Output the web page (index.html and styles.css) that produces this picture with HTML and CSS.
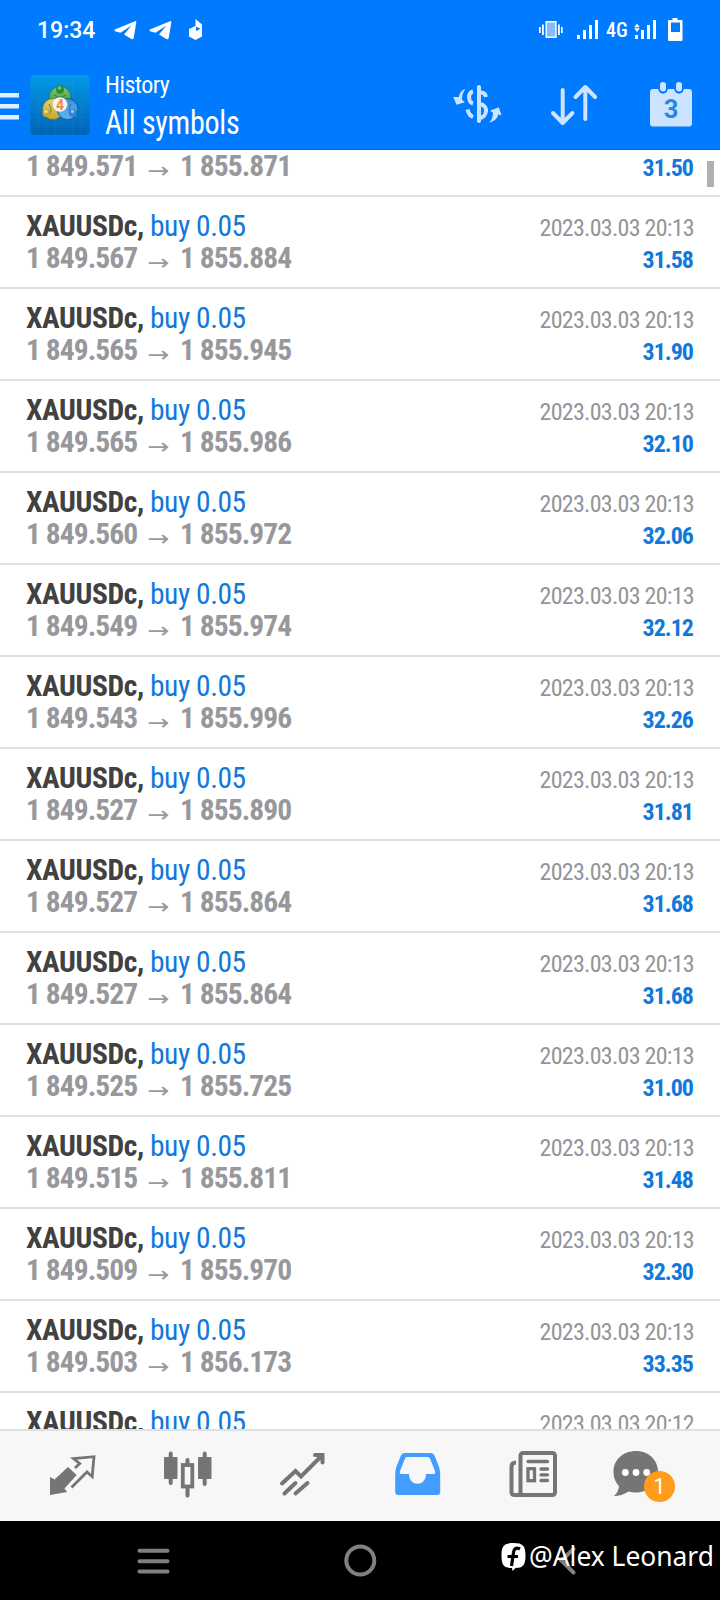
FILE: index.html
```
<!DOCTYPE html>
<html lang="en">
<head>
<meta charset="utf-8">
<title>History</title>
<link rel="stylesheet" href="styles.css">
</head>
<body>
<div class="screen">
  <header class="top">
    <div class="status">
      <span class="clock">19:34</span>
      <svg class="notes" viewBox="110 15 100 30" fill="#fff">
        <path d="M114.800 29.500 L135 21.200 Q136.500 20.800 136.300 22.500 L133.700 38 Q133 40 131 38.700 L124 34.500 L131.500 25.500 L120.500 32.700 L115 31.200 Q114 30.200 114.800 29.500Z"/>
        <path d="M149.800 29.500 L170 21.200 Q171.500 20.800 171.300 22.500 L168.700 38 Q168 40 166 38.700 L159 34.500 L166.500 25.500 L155.500 32.700 L150 31.200 Q149 30.200 149.800 29.500Z"/>
        <path fill-rule="evenodd" d="M195.500 19 L202 24.500 V36.500 L195.500 40 L189 36.500 V29 L195.500 26Z M196 26.500 V31 L200.500 28.700Z"/>
      </svg>
      <svg class="signal" viewBox="535 15 64 30" fill="#fff">
        <path d="M539 27h1.700v6H539zM542 24.500h1.800v10.500H542zM558 24.500h1.800v10.500H558zM561 27h1.700v6H561z"/>
        <rect x="546.200" y="21.800" width="9.700" height="15.400" fill="#80bcff" stroke="#fff" stroke-width="1.500"/>
        <path d="M577 35h3v4h-3zM583 30h3v9h-3zM589 25h3v14h-3zM595 20h3v19h-3z"/>
      </svg>
      <span class="net">4G</span>
      <svg class="battery" viewBox="632 15 54 30" fill="#fff">
        <path d="M637 23.500l2.800 3.700h-5.600zM637 32l-2.800-3.700h5.600zM635 35h3v4h-3zM641 30h3v9h-3zM647 25h3v14h-3zM653 20h3v19h-3z"/>
        <path fill-rule="evenodd" d="M672.500 18h5v2h4q1 0 1 1v19q0 1-1 1h-12.500q-1 0-1-1V21q0-1 1-1h3.500zM671 22.500v9.500h9v-9.500z"/>
      </svg>
    </div>
    <div class="bar">
      <svg class="menu" viewBox="0 60 30 90" fill="#e0efff"><path d="M0 93h19v4.500H0zM0 104h19v4.500H0zM0 115h19v4.500H0z"/></svg>
      <svg class="logo" viewBox="0 0 60 60">
        <defs>
          <linearGradient id="sky" x1="0" y1="0" x2="0" y2="1"><stop offset="0" stop-color="#0099e6"/><stop offset="1" stop-color="#0064b8"/></linearGradient>
          <linearGradient id="gr" x1="0" y1="0" x2="0" y2="1"><stop offset="0" stop-color="#7cc56f"/><stop offset="1" stop-color="#3c8e42"/></linearGradient>
          <linearGradient id="ye" x1="0" y1="0" x2="0" y2="1"><stop offset="0" stop-color="#ddd36a"/><stop offset="1" stop-color="#c4aa30"/></linearGradient>
          <linearGradient id="bl" x1="0" y1="0" x2="0" y2="1"><stop offset="0" stop-color="#3b8fd6"/><stop offset="1" stop-color="#5db7ee"/></linearGradient>
        </defs>
        <rect width="60" height="60" rx="4.500" fill="url(#sky)"/>
        <path d="M0 8.500h60M0 17h60M0 25.500h60M0 34h60M0 42.500h60M0 51h60M8.500 0v60M17 0v60M25.500 0v60M34 0v60M42.500 0v60M51 0v60" stroke="#fff" stroke-opacity=".03"/>
        <circle cx="30" cy="22.500" r="11" fill="url(#gr)" stroke="#1c6a4a" stroke-width=".8"/>
        <circle cx="23" cy="34" r="10.500" fill="url(#ye)" stroke="#6b6f34" stroke-width=".8"/>
        <circle cx="37.500" cy="34" r="10.500" fill="url(#bl)" stroke="#0d4a8c" stroke-width=".8"/>
        <path d="M24.500 20q5.500 5 11 0M19 29q3 5 1 10M41 29q-3 5-1 10" fill="none" stroke="#1c5a5a" stroke-opacity=".5" stroke-width="1.200"/>
        <circle cx="30" cy="14.700" r="4" fill="#2f8a36"/><circle cx="29.500" cy="13" r="1.800" fill="#7cc56f"/>
        <circle cx="16.500" cy="38" r="4" fill="#c9ac25"/><circle cx="16" cy="36.500" r="1.700" fill="#eee08a"/>
        <circle cx="43" cy="38" r="4" fill="#2f83cd"/><circle cx="42.500" cy="36.500" r="1.700" fill="#86cbf5"/>
        <circle cx="30" cy="29.500" r="7.300" fill="#f6f3ef"/>
        <text class="four" x="30" y="34.500" text-anchor="middle">4</text>
      </svg>
      <div class="titles">
        <div class="sub">History</div>
        <div class="main">All symbols</div>
      </div>
      <svg class="actions" viewBox="440 65 280 80" fill="none" stroke="#cce4ff" stroke-linecap="round" stroke-linejoin="round">
        <path d="M479 87v34" stroke-width="4"/>
        <path d="M473 91.500c-5.500 1.500-5 10.500 0 12M467.500 109.500c1 4 3 6.500 5.500 7.500M481 92.500c2.500 0 4.500 2 5 4.500M480 104c9.500 2 6.500 13 0 14" stroke-width="4" stroke-linecap="butt"/>
        <path d="M465.500 89c-4 1-6 4-6.500 8l-5.800 0 3.300 7.800 8.500-2.500-3-2.500c0-5 1-8 3.500-10.800zM489 122.500c6-1 9-5 9-8l3.500.700-2.700-8-8.800 3.500 3 2c0 4-1 7-4 9.800z" fill="#cce4ff" stroke="none"/>
        <path d="M562.700 90v33M553 113l9.700 10 9.700-10M585.300 119V87M575.500 97l9.800-10 9.800 10" stroke-width="4"/>
        <path d="M653 89h36q3 0 3 3v31.500q0 3-3 3h-36q-3 0-3-3V92q0-3 3-3z" fill="#cce4ff" stroke="none"/>
        <path d="M663 86v3M679 86v3" stroke="#007aff" stroke-width="9.500"/>
        <path d="M663 85v3.500M679 85v3.500" stroke-width="6"/>
        <text class="day" x="671" y="117.500" text-anchor="middle">3</text>
      </svg>
    </div>
  </header>
  <main class="list">
    <div class="row first"><p><b class="px">1 849.571</b><i>→</i><b class="px">1 855.871</b><b class="gain">31.50</b></p></div>
    <div class="row"><p><b class="sym">XAUUSDc,</b><span class="side">buy 0.05</span><span class="date">2023.03.03 20:13</span></p><p><b class="px">1 849.567</b><i>→</i><b class="px">1 855.884</b><b class="gain">31.58</b></p></div>
    <div class="row"><p><b class="sym">XAUUSDc,</b><span class="side">buy 0.05</span><span class="date">2023.03.03 20:13</span></p><p><b class="px">1 849.565</b><i>→</i><b class="px">1 855.945</b><b class="gain">31.90</b></p></div>
    <div class="row"><p><b class="sym">XAUUSDc,</b><span class="side">buy 0.05</span><span class="date">2023.03.03 20:13</span></p><p><b class="px">1 849.565</b><i>→</i><b class="px">1 855.986</b><b class="gain">32.10</b></p></div>
    <div class="row"><p><b class="sym">XAUUSDc,</b><span class="side">buy 0.05</span><span class="date">2023.03.03 20:13</span></p><p><b class="px">1 849.560</b><i>→</i><b class="px">1 855.972</b><b class="gain">32.06</b></p></div>
    <div class="row"><p><b class="sym">XAUUSDc,</b><span class="side">buy 0.05</span><span class="date">2023.03.03 20:13</span></p><p><b class="px">1 849.549</b><i>→</i><b class="px">1 855.974</b><b class="gain">32.12</b></p></div>
    <div class="row"><p><b class="sym">XAUUSDc,</b><span class="side">buy 0.05</span><span class="date">2023.03.03 20:13</span></p><p><b class="px">1 849.543</b><i>→</i><b class="px">1 855.996</b><b class="gain">32.26</b></p></div>
    <div class="row"><p><b class="sym">XAUUSDc,</b><span class="side">buy 0.05</span><span class="date">2023.03.03 20:13</span></p><p><b class="px">1 849.527</b><i>→</i><b class="px">1 855.890</b><b class="gain">31.81</b></p></div>
    <div class="row"><p><b class="sym">XAUUSDc,</b><span class="side">buy 0.05</span><span class="date">2023.03.03 20:13</span></p><p><b class="px">1 849.527</b><i>→</i><b class="px">1 855.864</b><b class="gain">31.68</b></p></div>
    <div class="row"><p><b class="sym">XAUUSDc,</b><span class="side">buy 0.05</span><span class="date">2023.03.03 20:13</span></p><p><b class="px">1 849.527</b><i>→</i><b class="px">1 855.864</b><b class="gain">31.68</b></p></div>
    <div class="row"><p><b class="sym">XAUUSDc,</b><span class="side">buy 0.05</span><span class="date">2023.03.03 20:13</span></p><p><b class="px">1 849.525</b><i>→</i><b class="px">1 855.725</b><b class="gain">31.00</b></p></div>
    <div class="row"><p><b class="sym">XAUUSDc,</b><span class="side">buy 0.05</span><span class="date">2023.03.03 20:13</span></p><p><b class="px">1 849.515</b><i>→</i><b class="px">1 855.811</b><b class="gain">31.48</b></p></div>
    <div class="row"><p><b class="sym">XAUUSDc,</b><span class="side">buy 0.05</span><span class="date">2023.03.03 20:13</span></p><p><b class="px">1 849.509</b><i>→</i><b class="px">1 855.970</b><b class="gain">32.30</b></p></div>
    <div class="row"><p><b class="sym">XAUUSDc,</b><span class="side">buy 0.05</span><span class="date">2023.03.03 20:13</span></p><p><b class="px">1 849.503</b><i>→</i><b class="px">1 856.173</b><b class="gain">33.35</b></p></div>
    <div class="row"><p><b class="sym">XAUUSDc,</b><span class="side">buy 0.05</span><span class="date">2023.03.03 20:12</span></p></div>
    <div class="thumb"></div>
  </main>
  <nav class="tabs">
    <svg viewBox="15 1431 115 90"><path d="M50 1477l4.500 2.500 13.500-12.500 8.700 8-12.200 13.500 2.700 3.500-17.200 3z" fill="#757575"/><path d="M75 1468l4.700-4.500-6.200-5 20.500-1.800-1.800 20-5.200-4.700-15.500 15.500" fill="none" stroke="#757575" stroke-width="2.800"/></svg>
    <svg viewBox="130 1431 115 90" fill="#757575"><rect x="164" y="1457" width="13.500" height="22" rx="1"/><rect x="198" y="1457" width="13.500" height="22" rx="1"/><path d="M170.700 1453.500v29.500M204.700 1453.500v30.500M187.500 1460v5M187.500 1488v7.500" stroke="#757575" stroke-width="4" stroke-linecap="round"/><rect x="182.800" y="1465" width="9.500" height="21.500" fill="none" stroke="#757575" stroke-width="3.800"/></svg>
    <svg viewBox="245 1431 115 90" fill="none" stroke="#757575" stroke-width="4" stroke-linecap="round"><path d="M282 1483.500l13.500-12.500 5.500 5.500 21.500-21.500M315 1455h7.500v7.500M284.500 1493.500l11-10.500M295.500 1493.500l12-10.500"/></svg>
    <svg viewBox="360 1431 115 90"><path fill-rule="evenodd" d="M404.500 1453h26q3 0 4.200 3l4 10q1.500 4 1.500 8v18q0 3-3 3h-39q-3 0-3-3v-18q0-4 1.500-8l4-10q1.200-3 3.800-3zM407 1457q-1.500 0-2 1.500l-5 12.500q-1 3 1.500 3h7.500c0 13 17 13 17 0h7.500q2.500 0 1.500-3l-5-12.500q-.500-1.500-2-1.500z" fill="#439cff"/></svg>
    <svg viewBox="475 1431 115 90" fill="none" stroke="#757575" stroke-width="4"><rect x="520.500" y="1453" width="34.500" height="42" rx="2.500"/><path d="M516 1462.500q-4.500 0-4.500 4V1492q0 3 3 3h8"/><path d="M528 1461.500h19.500M541 1469h6.500M541 1474.800h6.500M541 1480.500h6.500" stroke-width="3.300" stroke-linecap="round"/><rect x="528" y="1468.700" width="6.500" height="12" stroke-width="3.300"/></svg>
    <div class="chat">
      <svg viewBox="590 1431 115 90"><path d="M636 1451c12 0 22 8.500 22 20.500s-9.500 21-22 21q-4 0-7.500-1-7 4.500-14.500 4.500 4.500-4 5-10c-4-4-5.500-9-5.500-14.500 0-12 10-20.500 22.500-20.500z" fill="#757575"/><g fill="#fff"><circle cx="625.300" cy="1472.500" r="3.400"/><circle cx="636" cy="1472.500" r="3.400"/><circle cx="646.700" cy="1472.500" r="3.400"/></g></svg>
      <span class="badge">1</span>
    </div>
  </nav>
  <footer class="sys">
    <svg viewBox="0 1521 720 79" fill="none" stroke="#808080" stroke-width="4" stroke-linecap="round"><path d="M139.500 1550.700h28M139.500 1561.200h28M139.500 1571.600h28"/><circle cx="360.300" cy="1560.500" r="14"/><path d="M573.500 1549l-12 11.500 12 12"/></svg>
    <div class="mark">
      <svg viewBox="0 0 26 28"><path d="M12.500 0C22 0 24.500 3 24.500 12.500S22 25 14.500 25L11.500 28 11 25C2.500 25 .500 22 .500 12.500S3 0 12.500 0z" fill="#fff"/><path d="M19 6c-3.500-2-6-.500-6.500 3.500L10.500 23M6.500 13.500h10.500" fill="none" stroke="#000" stroke-width="3.200"/></svg>
      <span>@Alex Leonard</span>
    </div>
  </footer>
</div>
</body>
</html>
```
FILE: styles.css
```
* { box-sizing: border-box; }
body { margin: 0; background: #fff; font-family: "Roboto Condensed", Roboto, sans-serif; font-stretch: 75%; }
svg { display: block; flex: none; }
p { margin: 0; }
.screen { width: 720px; height: 1600px; display: flex; flex-direction: column; overflow: hidden; }
.top { height: 150px; flex: none; background: #007aff; border-bottom: 1px solid #1769bd; color: #fff; }
.status { height: 60px; display: flex; align-items: center; padding-left: 37px; }
.clock { width: 73px; font-family: Roboto, sans-serif; font-stretch: 100%; font-size: 23px; font-weight: 500; line-height: 60px; padding-top: 2px; }
.notes { width: 100px; height: 30px; }
.signal { width: 64px; height: 30px; margin-left: 325px; }
.net { width: 33px; padding-left: 7px; font-size: 20px; font-weight: 500; }
.battery { width: 54px; height: 30px; }
.bar { height: 89px; display: flex; }
.menu { width: 30px; height: 90px; }
.logo { width: 60px; height: 60px; margin-top: 15px; }
.four { font-size: 14px; font-weight: 700; fill: #f08a3c; font-family: Roboto, sans-serif; font-stretch: 100%; }
.titles { width: 350px; padding: 7px 0 0 15px; }
.sub { font-size: 24px; line-height: 36px; letter-spacing: -.5px; }
.main { width: 150px; font-size: 32.500px; line-height: 40px; letter-spacing: -.3px; white-space: nowrap; transform: scaleX(.925); transform-origin: 0 50%; }
.actions { width: 280px; height: 80px; margin-top: 5px; margin-right: -15px; }
.day { font-family: Roboto, sans-serif; font-stretch: 100%; font-size: 25.500px; font-weight: 700; fill: #2588e8; stroke: none; }
.list { position: relative; height: 1279px; flex: none; overflow: hidden; }
.row { height: 92px; border-bottom: 2px solid #e0e0e2; padding: 13px 26px 0; }
.row.first { height: 47px; padding-top: 0; }
.row p { display: flex; align-items: baseline; height: 32px; line-height: 32px; font-size: 29.500px; white-space: nowrap; }
.sym { color: #414141; width: 124px; letter-spacing: -.4px; }
.side { color: #1278dc; letter-spacing: -.45px; }
.date { color: #949599; font-size: 24px; letter-spacing: -.72px; margin-left: auto; }
.px { color: #97989c; width: 111px; letter-spacing: -.95px; }
.row i { font: normal 22px/32px "DejaVu Sans", sans-serif; color: #97989c; width: 43px; text-align: center; transform: translateY(2px) scaleX(1.2); }
.gain { color: #1278dc; font-size: 24px; letter-spacing: -1px; margin-left: auto; padding-right: 1px; }
.thumb { position: absolute; right: 6px; top: 11px; width: 7px; height: 26px; background: #b0b0b0; }
.tabs { height: 92px; flex: none; border-top: 2px solid #e0e0e0; background: #f7f7f7; padding: 0 15px; display: grid; grid-template-columns: repeat(6, 115px); }
.tabs svg { width: 115px; height: 90px; }
.chat { position: relative; }
.badge { position: absolute; left: 54px; top: 40px; width: 31px; height: 31px; border-radius: 50%; background: #ff9d1a; color: #fff; font: 22px/32px Roboto, sans-serif; text-align: center; }
.sys { position: relative; height: 79px; flex: none; background: #000; }
.sys svg { width: 720px; height: 79px; }
.mark { position: absolute; left: 501px; top: 22px; display: flex; color: #fff; }
.sys .mark svg { width: 26px; height: 28px; }
.mark span { font: 26.400px/26px "Noto Sans", sans-serif; white-space: nowrap; margin-left: 2px; }
```
